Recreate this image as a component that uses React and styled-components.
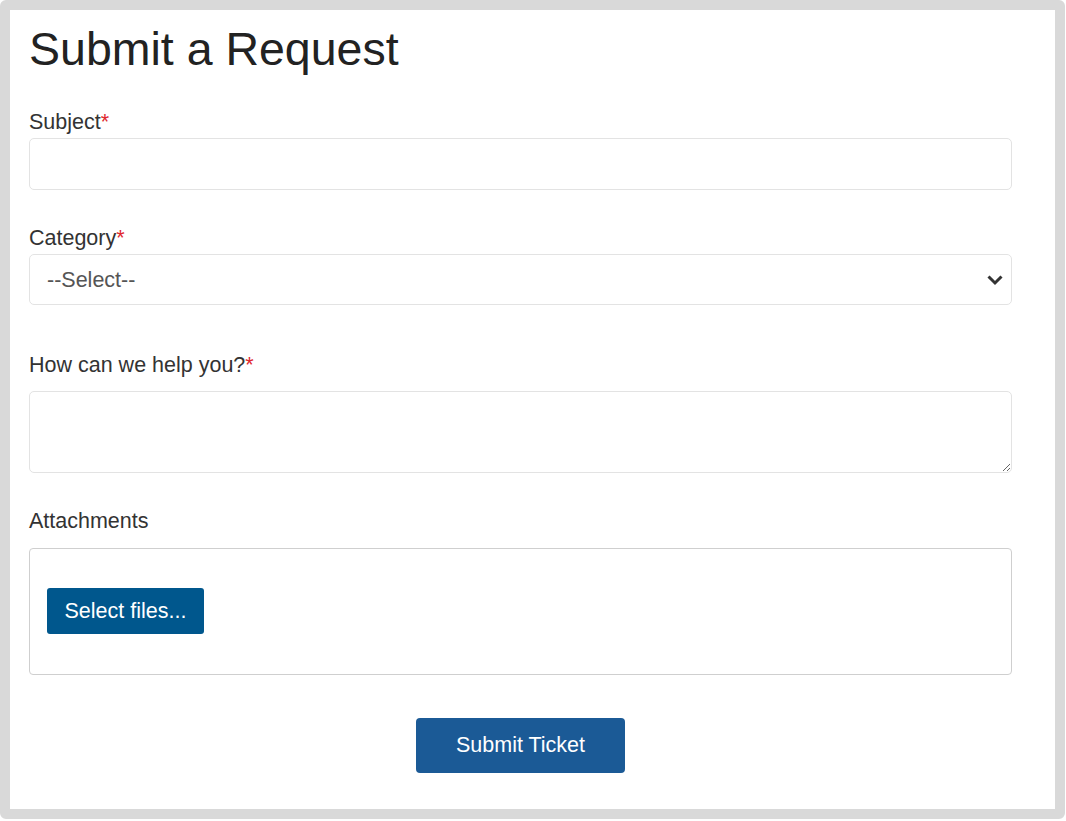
import React from 'react';
import styled, { createGlobalStyle } from 'styled-components';

const GlobalStyle = createGlobalStyle`
    html, body {
        margin: 0;
        padding: 0;
        background: #ffffff;
    }
    * {
        box-sizing: border-box;
    }
`;

const Frame = styled.div`
    width: 1065px;
    height: 819px;
    border: 10px solid #d9d9d9;
    border-radius: 6px;
    background: #ffffff;
    padding: 14px 0 0 19px;
    font-family: "Liberation Sans", Arial, sans-serif;
`;

const Form = styled.form`
    width: 983px;
    display: flex;
    flex-direction: column;
`;

const Title = styled.h1`
    margin: 0;
    font-size: 46.5px;
    line-height: 50px;
    font-weight: 400;
    color: #222222;
`;

const Field = styled.div`
    display: flex;
    flex-direction: column;
    margin-top: ${props => props.gap}px;
`;

const Label = styled.label`
    font-size: 21.5px;
    line-height: 26px;
    color: #333333;
    margin-bottom: ${props => props.space}px;
`;

const Required = styled.span`
    color: #e0282e;
`;

const TextInput = styled.input`
    width: 100%;
    height: 52px;
    border: 1px solid #e3e3e3;
    border-radius: 5px;
    padding: 0 17px;
    font-family: inherit;
    font-size: 21.5px;
    color: #555555;
    outline: none;
`;

const SelectWrap = styled.div`
    position: relative;
`;

const Select = styled.select`
    width: 100%;
    height: 51px;
    border: 1px solid #e3e3e3;
    border-radius: 5px;
    padding: 0 17px;
    font-family: inherit;
    font-size: 21.5px;
    color: #555555;
    background: #ffffff;
    appearance: none;
    outline: none;
`;

const Chevron = styled.svg`
    position: absolute;
    right: 8px;
    top: 20px;
    pointer-events: none;
`;

const TextArea = styled.textarea`
    width: 100%;
    height: 82px;
    border: 1px solid #e3e3e3;
    border-radius: 5px;
    padding: 10px 17px;
    font-family: inherit;
    font-size: 21.5px;
    color: #555555;
    resize: vertical;
    outline: none;
    display: block;
`;

const DropZone = styled.div`
    height: 127px;
    border: 1px solid #cfcfcf;
    border-radius: 4px;
    padding: 0 17px;
    display: flex;
    align-items: center;
`;

const SelectButton = styled.button`
    height: 46px;
    padding: 0 17.5px;
    margin-top: -1px;
    border: none;
    border-radius: 3px;
    background: #00578d;
    color: #ffffff;
    font-family: inherit;
    font-size: 21.5px;
    cursor: pointer;
`;

const Actions = styled.div`
    display: flex;
    justify-content: center;
    margin-top: 43px;
`;

const SubmitButton = styled.button`
    width: 209px;
    height: 55px;
    border: none;
    border-radius: 4px;
    background: #1b5a96;
    color: #ffffff;
    font-family: inherit;
    font-size: 21.5px;
    cursor: pointer;
`;

const App = () => {
    return <>
        <GlobalStyle />
        <Frame>
            <Form onSubmit={e => e.preventDefault()}>
                <Title>Submit a Request</Title>
                <Field gap={35}>
                    <Label space={3}>Subject<Required>*</Required></Label>
                    <TextInput type='text' />
                </Field>
                <Field gap={35}>
                    <Label space={3}>Category<Required>*</Required></Label>
                    <SelectWrap>
                        <Select defaultValue=''>
                            <option value=''>--Select--</option>
                        </Select>
                        <Chevron width='18' height='12' viewBox='0 0 18 12'>
                            <path d='M2.5 2.5 L9 9 L15.5 2.5' fill='none' stroke='#333333' strokeWidth='3' />
                        </Chevron>
                    </SelectWrap>
                </Field>
                <Field gap={47}>
                    <Label space={13}>How can we help you?<Required>*</Required></Label>
                    <TextArea />
                </Field>
                <Field gap={35}>
                    <Label space={14}>Attachments</Label>
                    <DropZone>
                        <SelectButton type='button'>Select files...</SelectButton>
                    </DropZone>
                </Field>
                <Actions>
                    <SubmitButton type='submit'>Submit Ticket</SubmitButton>
                </Actions>
            </Form>
        </Frame>
    </>;
};

export default App;
